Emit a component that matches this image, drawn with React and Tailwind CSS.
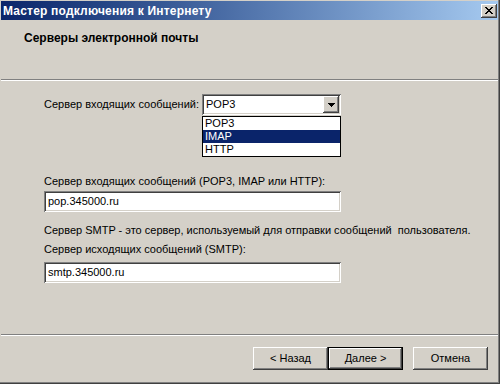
import React from "react";

const raised =
  "bg-[#d4d0c8] shadow-[inset_-1px_-1px_#404040,inset_1px_1px_#ffffff,inset_-2px_-2px_#808080,inset_2px_2px_#d4d0c8]";
const sunken =
  "bg-white shadow-[inset_1px_1px_#808080,inset_-1px_-1px_#ffffff,inset_2px_2px_#404040,inset_-2px_-2px_#d4d0c8]";

function Button({ children, isDefault }) {
  if (isDefault) {
    return (
      <div className="w-[75px] h-[23px] border border-black">
        <div className={`w-full h-full flex items-center justify-center ${raised}`}>{children}</div>
      </div>
    );
  }
  return (
    <div className={`w-[75px] h-[23px] flex items-center justify-center ${raised}`}>{children}</div>
  );
}

export default function App() {
  return (
    <div className="w-[500px] h-[384px] bg-[#d4d0c8] flex flex-col pt-px pl-px pr-[2px] pb-[2px] shadow-[inset_-1px_-1px_#404040,inset_-2px_-2px_#808080] text-black text-[11px] leading-[13px] font-['Liberation_Sans',Arial,sans-serif] overflow-hidden">
      {/* Title bar */}
      <div className="h-[19px] shrink-0 bg-linear-to-r from-[#0a246a] to-[#a6caf0] flex items-center justify-between pl-[2px] pr-[1px]">
        <span className="text-white font-bold text-[12px] leading-[14px] tracking-[0.2px]">
          Мастер подключения к Интернету
        </span>
        <div className={`w-[16px] h-[14px] flex items-center justify-center ${raised}`}>
          <svg width="8" height="7" viewBox="0 0 8 7" shapeRendering="crispEdges">
            <path
              d="M0 0h2v1H0zM6 0h2v1H6zM1 1h2v1H1zM5 1h2v1H5zM2 2h4v1H2zM3 3h2v1H3zM2 4h4v1H2zM1 5h2v1H1zM5 5h2v1H5zM0 6h2v1H0zM6 6h2v1H6z"
              fill="#000"
            />
          </svg>
        </div>
      </div>

      {/* Header */}
      <div className="h-[59px] shrink-0 pl-[23px] pt-[11px]">
        <span className="font-bold text-[12px] leading-[14px]">Серверы электронной почты</span>
      </div>
      <div className="h-[2px] shrink-0 border-t border-[#808080] border-b border-b-white" />

      {/* Content */}
      <div className="flex-1 flex flex-col pl-[43px]">
        <div className="mt-[13px] h-[21px] flex items-center">
          <span className="w-[158px]">Сервер входящих сообщений:</span>
          <div className="relative">
            <div className={`w-[139px] h-[21px] flex items-center justify-between pl-[4px] pr-[2px] ${sunken}`}>
              <span>POP3</span>
              <div className={`w-[16px] h-[17px] flex items-center justify-center ${raised}`}>
                <svg width="7" height="4" viewBox="0 0 7 4" shapeRendering="crispEdges">
                  <path d="M0 0h7v1H0zM1 1h5v1H1zM2 2h3v1H2zM3 3h1v1H3z" fill="#000" />
                </svg>
              </div>
            </div>
            <div className="absolute left-0 top-[22px] w-[139px] border border-black bg-white flex flex-col">
              <div className="h-[13px] pl-[2px] flex items-center">POP3</div>
              <div className="h-[13px] pl-[2px] flex items-center bg-[#0a246a] text-white">IMAP</div>
              <div className="h-[13px] pl-[2px] flex items-center">HTTP</div>
            </div>
          </div>
        </div>

        <div className="mt-[60px]">Сервер входящих сообщений (POP3, IMAP или HTTP):</div>
        <div className={`mt-[3px] w-[297px] h-[21px] flex items-center pl-[4px] ${sunken}`}>pop.345000.ru</div>

        <div className="mt-[12px]">Сервер SMTP - это сервер, используемый для отправки сообщений&nbsp; пользователя.</div>
        <div className="mt-[6px]">Сервер исходящих сообщений (SMTP):</div>
        <div className={`mt-[6px] w-[297px] h-[21px] flex items-center pl-[4px] ${sunken}`}>smtp.345000.ru</div>
      </div>

      <div className="h-[2px] shrink-0 border-t border-[#808080] border-b border-b-white" />

      {/* Footer */}
      <div className="h-[46px] shrink-0 flex pt-[11px] pl-[252px]">
        <Button>&lt; Назад</Button>
        <Button isDefault>Далее &gt;</Button>
        <div className="w-[10px]" />
        <Button>Отмена</Button>
      </div>
    </div>
  );
}
